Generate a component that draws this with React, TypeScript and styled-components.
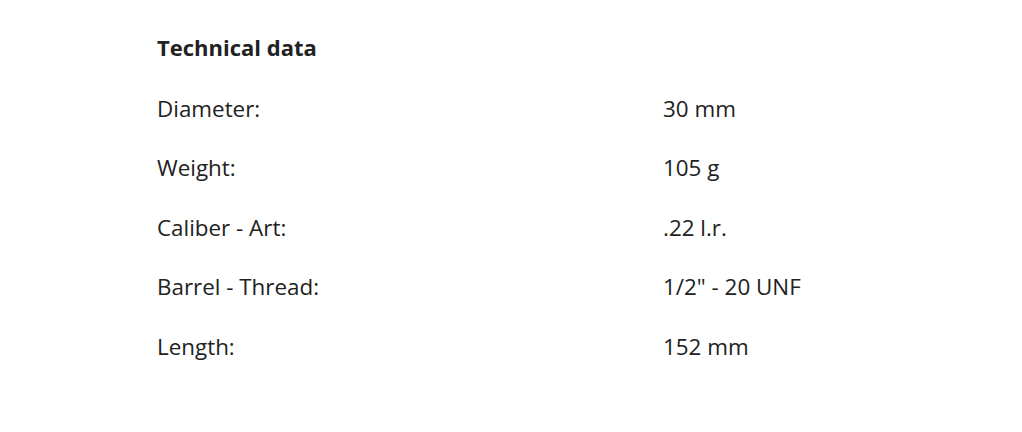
import React from 'react';
import styled, { createGlobalStyle } from 'styled-components';

const GlobalStyle = createGlobalStyle`
    body {
        margin: 0;
        background: #FFFFFF;
        font-family: "Open Sans", "Noto Sans", sans-serif;
        color: #222222;
    }
`;

const Section = styled.div`
    width: 1022px;
    height: 432px;
    box-sizing: border-box;
    padding: 32px 0 0 157px;
`;

const Title = styled.h3`
    margin: 0 0 17px 0;
    font-size: 22px;
    font-weight: 700;
    line-height: 30px;
`;

const Table = styled.div`
    display: flex;
    flex-direction: column;
`;

const Row = styled.div`
    display: grid;
    grid-template-columns: 506px 1fr;
    height: 59.5px;
    align-items: center;
`;

const Cell = styled.div`
    font-size: 22.4px;
    line-height: 30px;
`;

const rows: [string, string][] = [
    ['Diameter:', '30 mm'],
    ['Weight:', '105 g'],
    ['Caliber - Art:', '.22 l.r.'],
    ['Barrel - Thread:', '1/2" - 20 UNF'],
    ['Length:', '152 mm'],
];

const App: React.FC = () => {
    return (
        <>
            <GlobalStyle />
            <Section>
                <Title>Technical data</Title>
                <Table>
                    {rows.map(([label, value]) => (
                        <Row key={label}>
                            <Cell>{label}</Cell>
                            <Cell>{value}</Cell>
                        </Row>
                    ))}
                </Table>
            </Section>
        </>
    );
};

export default App;
